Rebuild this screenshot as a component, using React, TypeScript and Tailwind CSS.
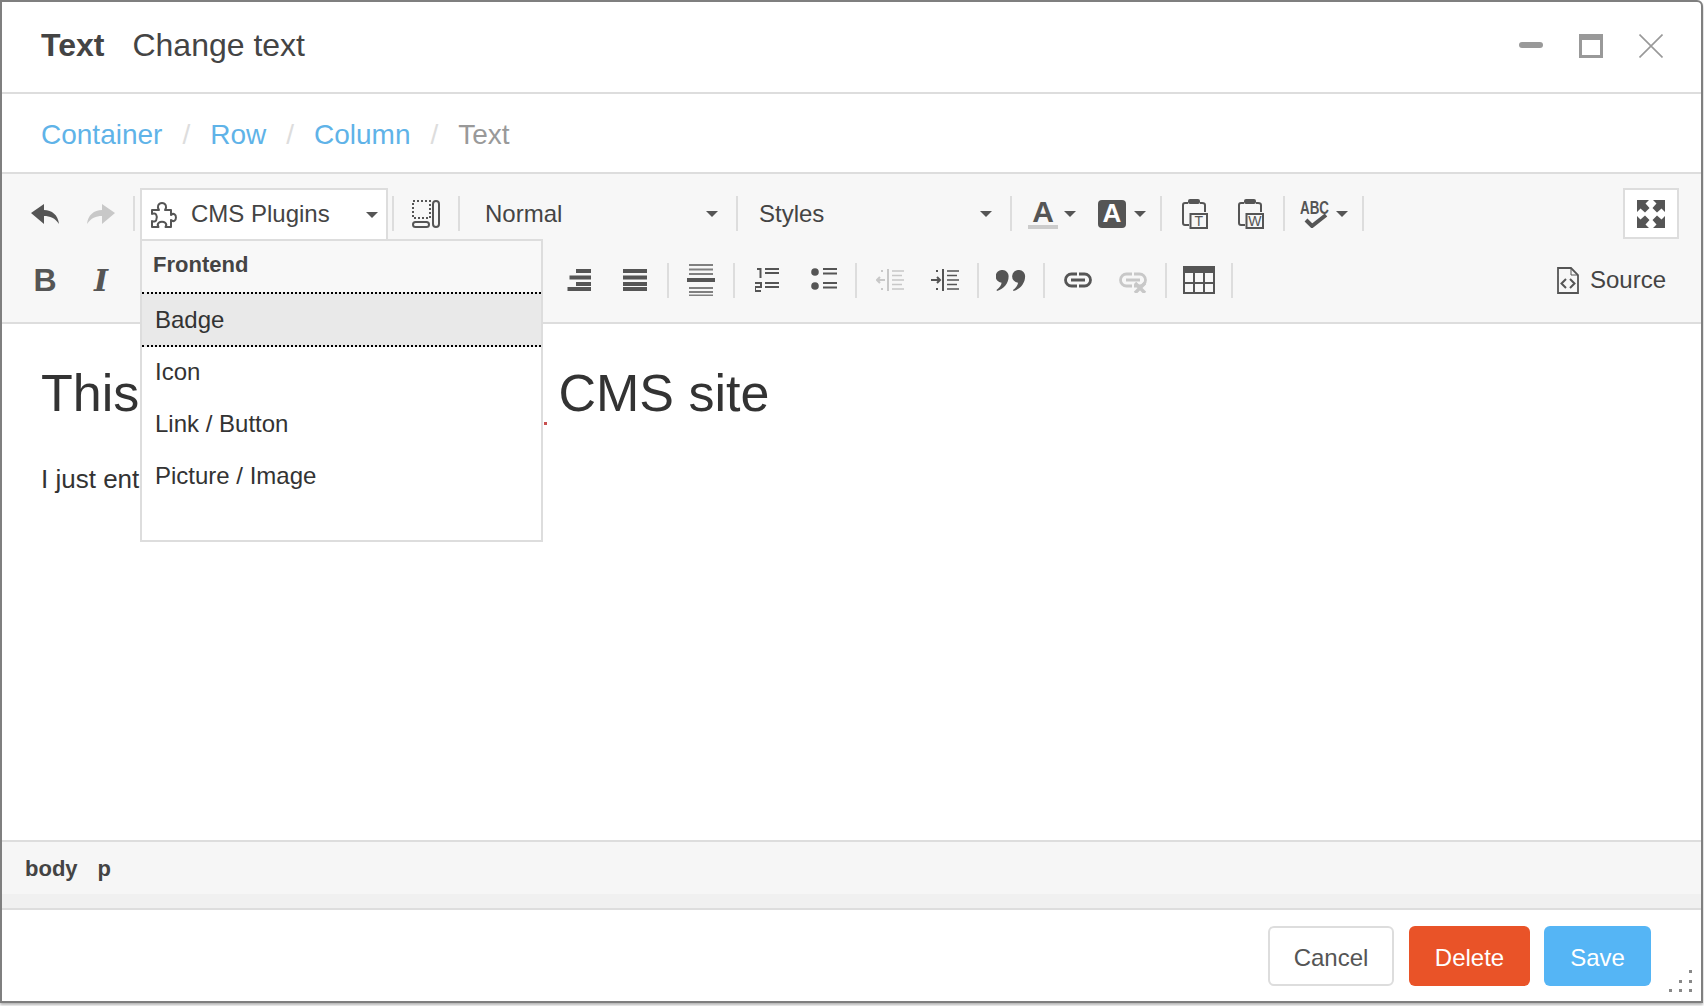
import React from "react";

const DARK = "#555555";
const OFF = "#c8c8c8";

function Sep() {
  return <div className="ml-1 mr-[5px] h-[35px] w-0.5 shrink-0 bg-[#dddddd]" />;
}

function Caret() {
  return (
    <svg width="12" height="6" viewBox="0 0 12 6" className="shrink-0">
      <polygon points="0,0 12,0 6,6" fill={DARK} />
    </svg>
  );
}

function PuzzleIcon() {
  return (
    <svg width="26" height="26" viewBox="0 0 26 26" fill="none" stroke={DARK} strokeWidth="2" strokeLinejoin="round" className="shrink-0">
      <path d="M1 8 H8 C7 6.5 6.5 5 7.2 3.4 C8 1.6 9.5 1 11 1 C12.5 1 14 1.6 14.8 3.4 C15.5 5 15 6.5 14 8 H20 V13 C21 12 22.5 11.6 23.6 12.3 C25.4 13.4 25.4 17.6 23.6 18.7 C22.5 19.4 21 19 20 18 V25 H14.5 C15.5 23.5 15.4 21.8 14.2 20.8 C12.6 19.5 9.4 19.5 7.8 20.8 C6.6 21.8 6.5 23.5 7.5 25 H1 V19 C2.5 20 4.4 19.7 5.2 18.2 C6 16.8 6 14.2 5.2 12.8 C4.4 11.3 2.5 11 1 12 Z" />
    </svg>
  );
}

function Undo({ color = DARK, flip = false }: { color?: string; flip?: boolean }) {
  return (
    <svg width="28" height="20" viewBox="0 0 28 20" style={flip ? { transform: "scaleX(-1)" } : undefined}>
      <path d="M0 9 L13 0 V6 C21 6 27 11 28 20 C24 14 19 12 13 12 V20 Z" fill={color} />
    </svg>
  );
}

function ShowBlocks() {
  return (
    <svg width="28" height="28" viewBox="0 0 28 28" fill="none" stroke={DARK} strokeWidth="2">
      <rect x="1" y="1" width="17" height="17" strokeDasharray="2 2" />
      <rect x="21" y="1" width="6" height="26" rx="3" />
      <rect x="1" y="22" width="16" height="5" rx="2.5" />
    </svg>
  );
}

function Clipboard({ letter }: { letter: string }) {
  return (
    <svg width="26" height="30" viewBox="0 0 26 30" fill="none" stroke={DARK} strokeWidth="2">
      <path d="M6 4 H3 Q1 4 1 6 V24 Q1 26 3 26 H7" />
      <path d="M18 4 H20 Q23 4 23 6 V13" />
      <rect x="6" y="0" width="12" height="5" rx="2" fill={DARK} stroke="none" />
      <rect x="8.5" y="15" width="16.5" height="14" />
      <text x="16.8" y="27" textAnchor="middle" fontSize="14" fontFamily="Liberation Sans" fill={DARK} stroke="none">
        {letter}
      </text>
    </svg>
  );
}

function Spell() {
  return (
    <svg width="30" height="28" viewBox="0 0 30 28">
      <text x="0" y="14" fontSize="18" fontWeight="700" fontFamily="Liberation Sans" textLength="29" lengthAdjust="spacingAndGlyphs" fill={DARK}>
        ABC
      </text>
      <path d="M6 20 L12 26 L26 15" fill="none" stroke={DARK} strokeWidth="4" />
    </svg>
  );
}

function Bars({ rows, color = DARK }: { rows: [number, number, number, number][]; color?: string }) {
  return (
    <svg width="28" height="32" viewBox="0 0 28 32">
      {rows.map(([x, y, w, h], i) => (
        <rect key={i} x={x} y={y} width={w} height={h} fill={h < 3 ? "#808080" : color} />
      ))}
    </svg>
  );
}

function NumList() {
  return (
    <svg width="24" height="24" viewBox="0 0 24 24" fill="none" stroke={DARK} strokeWidth="2">
      <path d="M2 1 H5.5 V10" />
      <path d="M0 15 H6 V19 H0 V23 H6" />
      <path d="M10 1 H24 M10 5 H24 M10 15 H24 M10 19 H24" />
    </svg>
  );
}

function BulletList() {
  return (
    <svg width="26" height="24" viewBox="0 0 26 24">
      <circle cx="4" cy="4" r="3.8" fill={DARK} />
      <circle cx="4" cy="18" r="3.8" fill={DARK} />
      <path d="M12 1 H26 M12 5.5 H26 M12 15 H26 M12 19.5 H26" stroke={DARK} strokeWidth="2" />
    </svg>
  );
}

function Indent({ color, out = false }: { color: string; out?: boolean }) {
  return (
    <svg width="28" height="22" viewBox="0 0 28 22" fill="none" stroke={color} strokeWidth="2">
      <path d="M12 0 V22" strokeWidth="2" />
      <path d="M16 2 H28 M16 6.5 H26 M16 11 H28 M16 15.5 H26 M16 20 H28" strokeWidth="1.6" />
      <path d="M5 2 H9 M5 20 H9" strokeDasharray="2 2" />
      {out ? (
        <path d="M9 11 H1 M4 8 L1 11 L4 14" />
      ) : (
        <path d="M0 11 H9 M6 8 L9 11 L6 14" />
      )}
    </svg>
  );
}

function Quote() {
  const mark = "M6.5 0 A6 6 0 0 1 12.6 6.5 C12.6 13 8 19 1 21 L0.5 20 C3.5 18 5.2 15.5 5.6 12.8 A6.4 6.4 0 0 1 6.5 0 Z";
  return (
    <svg width="30" height="21" viewBox="0 0 30 21" fill={DARK}>
      <path d={mark} />
      <path d={mark} transform="translate(16.5 0)" />
    </svg>
  );
}

function Chain({ color, broken = false }: { color: string; broken?: boolean }) {
  return (
    <svg width="28" height="26" viewBox="0 0 28 26" fill="none" stroke={color} strokeWidth="2.8">
      <g transform="translate(0 5.5)">
        <path d="M13 1.5 H7.5 A6 6 0 0 0 7.5 13.5 H13" />
        <path d="M15 1.5 H20.5 A6 6 0 0 1 20.5 13.5 H15" />
        <path d="M7 7.5 H21" strokeWidth="3" />
      </g>
      {broken && <path d="M16 16 L26 26 M26 16 L16 26" strokeWidth="3.4" />}
    </svg>
  );
}

function TableIcon() {
  return (
    <svg width="32" height="28" viewBox="0 0 32 28" fill="none" stroke={DARK} strokeWidth="2">
      <rect x="0" y="0" width="32" height="7" fill={DARK} stroke="none" />
      <rect x="1" y="1" width="30" height="26" />
      <path d="M11 6 V27 M21 6 V27 M1 17 H31" />
    </svg>
  );
}

function SourceIcon() {
  return (
    <svg width="22" height="27" viewBox="0 0 22 27" fill="none" stroke={DARK} strokeWidth="1.8">
      <path d="M1 1 H14 L21 8 V26 H1 Z" />
      <path d="M14 1 V8 H21" strokeWidth="1" />
      <path d="M9 12 L4.5 16.5 L9 21 M13 12 L17.5 16.5 L13 21" strokeWidth="2" />
    </svg>
  );
}

function Maximize() {
  return (
    <svg width="28" height="28" viewBox="0 0 28 28" fill={DARK}>
      <path d="M0 0 H12 L8.5 3.5 L12.5 8 L8 12.5 L3.5 8.5 L0 12 Z" />
      <path d="M28 0 H16 L19.5 3.5 L15.5 8 L20 12.5 L24.5 8.5 L28 12 Z" />
      <path d="M0 28 H12 L8.5 24.5 L12.5 20 L8 15.5 L3.5 19.5 L0 16 Z" />
      <path d="M28 28 H16 L19.5 24.5 L15.5 20 L20 15.5 L24.5 19.5 L28 16 Z" />
    </svg>
  );
}

function Grip() {
  return (
    <svg width="23" height="22" viewBox="0 0 23 22" fill="#888888">
      <rect x="20" y="0" width="3" height="3" />
      <rect x="10" y="10" width="3" height="3" />
      <rect x="20" y="10" width="3" height="3" />
      <rect x="0" y="19" width="3" height="3" />
      <rect x="10" y="19" width="3" height="3" />
      <rect x="20" y="19" width="3" height="3" />
    </svg>
  );
}

const btn = "flex h-full shrink-0 items-center justify-center";

export default function App() {
  return (
    <div className="h-screen w-full overflow-hidden bg-white font-['Liberation_Sans',Arial,sans-serif]">
      <div className="flex h-[1003px] w-[1703px] flex-col rounded-tr-md border-2 border-[#7f7f7f] bg-white text-[#333333] shadow-[0_2px_3px_rgba(0,0,0,0.3)]">
        {/* title bar */}
        <div className="flex h-[92px] shrink-0 items-center border-b-2 border-[#dddddd] pb-[2px] pl-[39px] pr-[38px]">
          <span className="mb-[2px] mr-[28px] text-[32px] font-bold text-[#444444]">Text</span>
          <span className="mb-[2px] text-[32px] text-[#444444]">Change text</span>
          <div className="ml-auto flex items-center gap-9">
            <svg width="24" height="24" viewBox="0 0 24 24">
              <rect x="0" y="8" width="24" height="6" rx="3" fill="#999999" />
            </svg>
            <svg width="24" height="24" viewBox="0 0 24 24" fill="none">
              <rect x="1.5" y="3" width="21" height="19.5" stroke="#999999" strokeWidth="3" />
              <rect x="0" y="0" width="24" height="6" fill="#999999" />
            </svg>
            <svg width="24" height="24" viewBox="0 0 24 24" fill="none">
              <path d="M0.5 0.5 L23.5 23.5 M23.5 0.5 L0.5 23.5" stroke="#999999" strokeWidth="1.6" />
            </svg>
          </div>
        </div>

        {/* breadcrumb */}
        <div className="flex h-[80px] shrink-0 items-center border-b-2 border-[#dddddd] pl-[39px] pt-[3px] text-[28px]">
          <span className="text-[#5fb3e8]">Container</span>
          <span className="mx-5 text-[#dddddd]">/</span>
          <span className="text-[#5fb3e8]">Row</span>
          <span className="mx-5 text-[#dddddd]">/</span>
          <span className="text-[#5fb3e8]">Column</span>
          <span className="mx-5 text-[#dddddd]">/</span>
          <span className="text-[#999999]">Text</span>
        </div>

        {/* toolbar */}
        <div className="h-[150px] shrink-0 border-b-2 border-[#dddddd] bg-[#f7f7f7] pl-[15px] pr-[22px] pt-[14px] text-[24px] text-[#444444]">
          <div className="flex h-[51px] items-center">
            <div className={`${btn} w-14`}>
              <Undo />
            </div>
            <div className={`${btn} w-14`}>
              <Undo color={OFF} flip />
            </div>
            <Sep />
            <div className="relative flex h-full w-[248px] shrink-0 items-center border-2 border-b-0 border-[#dddddd] bg-white pl-[9px] pr-2">
              <PuzzleIcon />
              <span className="mb-0.5 ml-[14px]">CMS Plugins</span>
              <span className="ml-auto">
                <Caret />
              </span>
              <div className="absolute left-[-2px] top-full z-10 flex h-[303px] w-[403px] flex-col border-2 border-[#dddddd] bg-white text-[24px] text-[#333333]">
                <div className="flex h-[51px] shrink-0 items-center bg-[#f8f8f8] pb-1 pl-[11px] text-[22px] font-bold text-[#444444]">
                  Frontend
                </div>
                <div className="flex h-[55px] shrink-0 items-center border-y-2 border-dotted border-black bg-[#e9e9e9] pl-[13px]">
                  Badge
                </div>
                <div className="mt-px flex flex-col gap-1 pl-[13px]">
                  <div className="flex h-12 items-center">Icon</div>
                  <div className="flex h-12 items-center">Link / Button</div>
                  <div className="flex h-12 items-center">Picture / Image</div>
                </div>
              </div>
            </div>
            <Sep />
            <div className={`${btn} w-[55px] pr-0.5`}>
              <ShowBlocks />
            </div>
            <Sep />
            <div className="flex h-full w-[267px] shrink-0 items-center pl-5 pr-[14px]">
              <span>Normal</span>
              <span className="ml-auto">
                <Caret />
              </span>
            </div>
            <Sep />
            <div className="flex h-full w-[263px] shrink-0 items-center pl-4 pr-[14px]">
              <span>Styles</span>
              <span className="ml-auto">
                <Caret />
              </span>
            </div>
            <Sep />
            <div className="flex h-full w-[70px] shrink-0 items-center pl-[11px]">
              <span className="flex h-[30px] w-[30px] flex-col items-center border-b-4 border-[#cccccc] text-[30px] font-bold leading-[26px] text-[#555555]">
                A
              </span>
              <span className="ml-[6px]">
                <Caret />
              </span>
            </div>
            <div className="flex h-full w-[69px] shrink-0 items-center pl-[11px]">
              <span className="flex h-7 w-7 items-center justify-center rounded bg-[#555555] text-[26px] font-bold text-white">
                A
              </span>
              <span className="ml-2">
                <Caret />
              </span>
            </div>
            <Sep />
            <div className={`${btn} w-14`}>
              <Clipboard letter="T" />
            </div>
            <div className={`${btn} w-14`}>
              <Clipboard letter="W" />
            </div>
            <Sep />
            <div className="flex h-full w-[68px] shrink-0 items-center pl-[10px]">
              <Spell />
              <span className="ml-[6px]">
                <Caret />
              </span>
            </div>
            <Sep />
            <div className="ml-auto flex h-full w-14 shrink-0 items-center justify-center border-2 border-[#dddddd] bg-white">
              <Maximize />
            </div>
          </div>

          <div className="mt-[7px] flex h-[68px] items-center">
            <div className={`${btn} w-14 text-[32px] font-bold text-[#555555]`}>B</div>
            <div className={`${btn} w-14 font-['DejaVu_Serif',serif] text-[30px] font-bold italic text-[#555555]`}>
              I
            </div>
            {/* the plugin menu lies over this stretch of the toolbar */}
            <div className="w-[422px] shrink-0" />
            <div className={`${btn} w-14`}>
              <Bars rows={[[11, 5, 15, 4], [4.5, 11.5, 21.5, 4], [11, 18, 15, 4], [2.5, 23, 23.5, 4]]} />
            </div>
            <div className={`${btn} w-14`}>
              <Bars rows={[[2, 5, 24, 4], [2, 11.5, 24, 4], [2, 18, 24, 4], [2, 23, 24, 4]]} />
            </div>
            <Sep />
            <div className={`${btn} w-[55px] pr-0.5`}>
              <Bars
                rows={[
                  [2, 0, 24, 2],
                  [2, 4.5, 24, 2],
                  [2, 9, 24, 2],
                  [0, 14, 28, 4],
                  [2, 23, 24, 2],
                  [2, 27, 24, 2],
                  [2, 30.5, 24, 1.5],
                ]}
              />
            </div>
            <Sep />
            <div className={`${btn} w-[55px] pr-0.5`}>
              <NumList />
            </div>
            <div className={`${btn} w-14 pl-0.5`}>
              <BulletList />
            </div>
            <Sep />
            <div className={`${btn} w-[55px]`}>
              <Indent color={OFF} out />
            </div>
            <div className={`${btn} w-14`}>
              <Indent color={DARK} />
            </div>
            <Sep />
            <div className={`${btn} w-[55px] pr-0.5`}>
              <Quote />
            </div>
            <Sep />
            <div className={`${btn} w-[55px]`}>
              <Chain color={DARK} />
            </div>
            <div className={`${btn} w-14`}>
              <Chain color={OFF} broken />
            </div>
            <Sep />
            <div className={`${btn} w-[55px] pr-0.5`}>
              <TableIcon />
            </div>
            <Sep />
            <div className="ml-auto mr-[13px] flex items-center gap-[11px]">
              <SourceIcon />
              <span>Source</span>
            </div>
          </div>
        </div>

        {/* editor area */}
        <div className="relative min-h-0 flex-1 px-[39px] pt-[38px] text-[#333333]">
          <div className="text-[52px] leading-[62px]">This is a clean django CMS site</div>
          <div className="mt-[37px] text-[26px] leading-[36px]">I just entered some text.</div>
          <div className="absolute left-[542px] top-[98px] h-[3px] w-[3px] bg-[#c8504f]" />
        </div>

        {/* element path */}
        <div className="flex h-[70px] shrink-0 flex-col border-y-2 border-[#dddddd] bg-[#f6f6f6] text-[22px] font-bold text-[#444444]">
          <div className="flex flex-1 items-center gap-5 pl-[23px]">
            <span>body</span>
            <span>p</span>
          </div>
          <div className="h-[14px] shrink-0 bg-[#f0f0f0]" />
        </div>

        {/* footer */}
        <div className="relative flex h-[91px] shrink-0 items-start justify-end pr-[50px] pt-4 text-[24px]">
          <button className="flex h-[60px] w-[126px] items-center justify-center rounded-md border-2 border-[#dddddd] bg-white pt-1 text-[#555555]">
            Cancel
          </button>
          <button className="ml-[15px] flex h-[60px] w-[121px] items-center justify-center rounded-md bg-[#e95328] pt-1 text-white">
            Delete
          </button>
          <button className="ml-[14px] flex h-[60px] w-[107px] items-center justify-center rounded-md bg-[#55b5f5] pt-1 text-white">
            Save
          </button>
          <div className="absolute bottom-[9px] right-[9px] flex">
            <Grip />
          </div>
        </div>
      </div>
    </div>
  );
}
